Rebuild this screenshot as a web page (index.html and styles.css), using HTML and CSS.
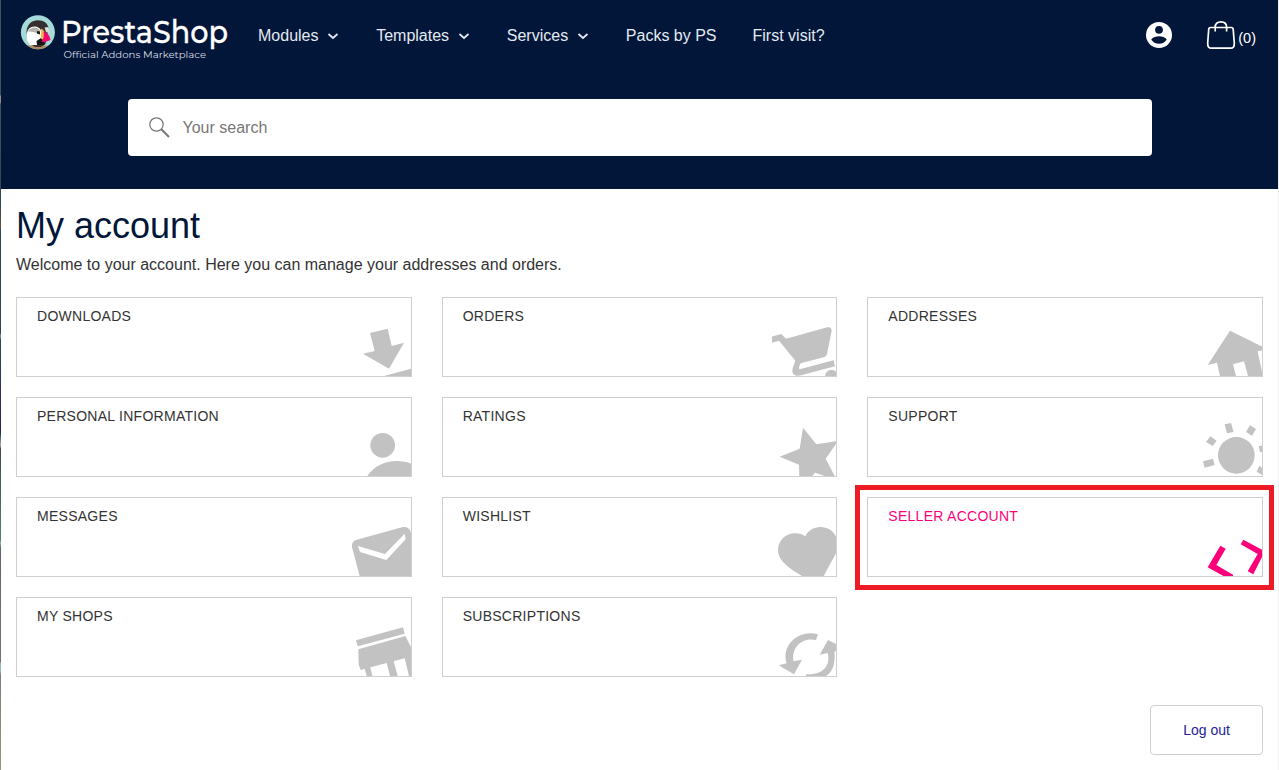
FILE: index.html
```
<!DOCTYPE html>
<html lang="en">
<head>
<meta charset="utf-8">
<title>My account</title>
<link rel="stylesheet" href="styles.css">
</head>
<body>
<div class="page">
  <header class="header">
    <div class="topbar">
      <a class="logo">
        <svg width="230" height="70" viewBox="1 0 230 70">
          <clipPath id="badge"><circle cx="37.9" cy="32.2" r="17"/></clipPath>
          <g clip-path="url(#badge)">
            <rect x="20" y="14" width="36" height="36" fill="#a4dbd9"/>
            <path d="M26.500 32C27 24 32 20.300 38 20.300c6 0 9.500 3 10.500 7.700l-3 16H29z" fill="#35302f"/>
            <path d="M27 34c0-5 4-8 8-7.500 5 .5 7 4 6.500 9l-1 9.500H30c-3-3-3.500-7-3-11z" fill="#fff"/>
            <path d="M28 31.500c3-5 9-5 12-1l-1 4c-3-2-6-3-11-3z" fill="#b4b4ae"/>
            <path d="M37 31l3 .5v3l-3-1z" fill="#1c1a1b"/>
            <path d="M44.500 27.500l4-.5 1 6-3.500-1z" fill="#dcdcdc"/>
            <path d="M36.500 41l4.500-3 4 7h-8z" fill="#161416"/>
            <path d="M41 28.500c2 1 3 2 4 4l-1 8-3-2z" fill="#f4b545"/>
            <path d="M43.500 31.500c4 1 6.500 5 7 8.500-3 1.500-6 2.300-9 2 2-3 3-6 2-10.500z" fill="#f5056c"/>
            <path d="M20 45.500h36v6H20z" fill="#a88b63"/>
            <path d="M32 45h12l-3 2h-6z" fill="#40342c"/>
          </g>
          <text class="logo-name" x="61" y="43" textLength="167" lengthAdjust="spacingAndGlyphs">PrestaShop</text>
          <text class="logo-tag" x="63.500" y="57.500" textLength="142.500" lengthAdjust="spacingAndGlyphs">Official Addons Marketplace</text>
        </svg>
      </a>
      <nav class="nav">
        <a>Modules<svg class="chev" width="14" height="10" viewBox="0 0 14 10"><path d="M2.500 3l4.500 4 4.500-4"/></svg></a>
        <a>Templates<svg class="chev" width="14" height="10" viewBox="0 0 14 10"><path d="M2.500 3l4.500 4 4.500-4"/></svg></a>
        <a>Services<svg class="chev" width="14" height="10" viewBox="0 0 14 10"><path d="M2.500 3l4.500 4 4.500-4"/></svg></a>
        <a>Packs by PS</a>
        <a>First visit?</a>
      </nav>
      <div class="tools">
        <svg width="26" height="26" viewBox="0 0 26 26"><circle cx="13" cy="13" r="13" fill="#fff"/><circle cx="13" cy="7.800" r="3.900" fill="#011638"/><path d="M5.200 17.500c1.500-2.300 5-3.300 7.800-3.300s6.300 1 7.800 3.300c-1.700 2.800-4.600 4.300-7.800 4.300s-6.100-1.500-7.800-4.300z" fill="#011638"/></svg>
        <a class="cart">
          <svg width="30" height="30" viewBox="0 0 30 30" fill="none" stroke="#fff" stroke-width="1.700"><path d="M4.500 7.500h20.700c1.300 0 1.900.700 2 2l1.100 13.500c.2 3.500-1.100 5.200-3.800 5.200H5.500c-2.700 0-4-1.700-3.800-5.200L2.700 9.500c.1-1.300.700-2 1.800-2zM9.200 11.500V7.300c0-3.500 2.200-5.500 5.700-5.500s5.700 2 5.700 5.500v4.200"/></svg>
          <span>(0)</span>
        </a>
      </div>
    </div>
    <div class="search">
      <svg width="22" height="22" viewBox="0 0 22 22" fill="none" stroke="#777"><circle cx="7.500" cy="7.500" r="6.700" stroke-width="1.200"/><path d="M12.300 12.300l7.700 7.700" stroke-width="2"/></svg>
      <span>Your search</span>
    </div>
  </header>
  <main class="main">
    <h1>My account</h1>
    <p class="intro">Welcome to your account. Here you can manage your addresses and orders.</p>
    <div class="grid">
      <a class="card"><span>DOWNLOADS</span>
        <svg class="icon" viewBox="21 36 192 162"><path d="M90 69l53-13 12 52 37-10-45 78-78-45 35-8zM132 198l81-22v22z"/></svg></a>
      <a class="card"><span>ORDERS</span>
        <svg class="icon" viewBox="36 36 192 162"><path d="M33 80l31-8 14 14 124-34c8-2 13 2 13 10l-14 70q-2 8-10 10l-69 18c-4 8-7 16-3 18l102-27 4 18-102 27c-15 4-26-2-26-14 0-8 6-20 9-30L57 92l-20 6zM195 198c2-12 10-18 20-18 6 0 10 2 14 6v12z"/></svg></a>
      <a class="card"><span>ADDRESSES</span>
        <svg class="icon" viewBox="24 36 192 162"><path d="M53 165l67-103 97 48v11l-14 3 14 66v8h-43l-12-44-33 9 9 35H90l-9-40z"/></svg></a>
      <a class="card"><span>PERSONAL INFORMATION</span>
        <svg class="icon" viewBox="21 336 192 162"><circle cx="128" cy="406" r="37"/><path d="M82 498c20-30 53-45 89-45 17 0 32 3 42 8v37z"/></svg></a>
      <a class="card"><span>RATINGS</span>
        <svg class="icon" viewBox="36 336 192 162"><path d="M129 353l40 50 59-9v8l-31 44 27 52h-29l-30-10-8 10h-39l-1-34-58-24 60-24z"/></svg></a>
      <a class="card"><span>SUPPORT</span>
        <svg class="icon" viewBox="24 336 192 162"><circle cx="139" cy="436" r="55"/><path d="M104 343l19-4 8 27-20 4zM180 346l18 11-12 20-18-11zM61 379l19 13-12 16-20-12zM39 454l30-8 5 19-30 8zM206 409l12-3v20h-8zM208 467l12 10v20l-20-12z"/></svg></a>
      <a class="card"><span>MESSAGES</span>
        <svg class="icon" viewBox="21 36 192 162"><path fill-rule="evenodd" d="M36 112c-2-12 4-20 14-23l136-37c15-4 24 4 27 17v129H59zM54 108l6 18 79 24 58-62-3-17-59 61z"/></svg></a>
      <a class="card"><span>WISHLIST</span>
        <svg class="icon" viewBox="36 36 192 162"><path d="M126 198c-24-16-72-40-72-78 0-28 23-50 52-50 12 0 22 3 30 9 7-17 25-28 45-28 21 0 39 11 47 29v50l-37 68z"/></svg></a>
      <a class="card active"><span>SELLER ACCOUNT</span>
        <svg class="icon" viewBox="24 126 192 162"><path d="M91 197l16 9-28 49 50 29v6h-25l-51-28zM160 179l57 31v19l-27 54-17-9 30-52-51-29z"/></svg></a>
      <a class="card"><span>MY SHOPS</span>
        <svg class="icon" viewBox="21 336 192 162"><path d="M48 391l141-39 5 19-141 38zM55 418l141-40 17 33v87h-6l-13-53-33 9 12 44h-23l-10-39-49 13 6 26H80l-6-22-12 4-6-17z"/></svg></a>
      <a class="card"><span>SUBSCRIPTIONS</span>
        <svg class="icon" viewBox="36 336 192 162"><path d="M174 373c-55-17-112 30-94 87l-24 6 46 27 24-44-25 5c-9-41 26-74 67-64zM204 390l24 12v20l-5 4c4 32-4 60-25 72h-60v-5c45 3 76-22 65-64l-24 5z"/></svg></a>
    </div>
    <div class="actions"><a class="logout">Log out</a></div>
  </main>
</div>
</body>
</html>
```
FILE: styles.css
```
* { box-sizing: border-box; }
body {
  margin: 0;
  height: 770px;
  overflow: hidden;
  padding: 0 1px;
  font-family: "Liberation Sans", Arial, sans-serif;
  font-size: 16px;
  background: linear-gradient(#3c5557 0 95px, #8d9182 96px 102px, #3c5557 104px, #354552 205px, #67513f 226px, #30455c 230px, #354052 333px, #86a0a5 336px, #30455f 340px, #2c235c 432px, #304a50 435px, #aaa 445px, #404950 449px, #527f77 540px, #8eb49a 543px, #5d6572 548px, #73747a 662px, #91bba2 663px 671px, #827e75 675px, #9c927f) left / 1px 100% no-repeat, #f0f0f0;
}
.page { height: 770px; background: #fff; }
.header { height: 189px; background: #011638; }
.topbar { display: flex; height: 70px; align-items: center; padding-right: 22px; }
.logo, .logo svg { display: block; overflow: visible; }
.logo-name { font: 500 31px Montserrat, Lato, sans-serif; fill: #fff; stroke: #fff; stroke-width: .3px; }
.logo-tag { font: 400 9.500px Montserrat, Lato, sans-serif; fill: #d9dde4; }
.nav { display: flex; gap: 36px; margin-left: 27px; padding-top: 2px; color: #e4eaf3; white-space: nowrap; }
.nav a { display: flex; align-items: center; }
.chev { margin: 0 0 0 7.700px; fill: none; stroke: #e4eaf3; stroke-width: 1.700; }
.tools { display: flex; align-items: center; margin-left: auto; gap: 34px; color: #fff; }
.cart { display: flex; align-items: center; gap: 2px; }
.cart span { padding-top: 6px; font-size: 14.500px; }
.search {
  display: flex;
  align-items: center;
  gap: 12px;
  width: 1024px;
  height: 57px;
  margin: 29px 0 0 127px;
  padding-left: 20.500px;
  border-radius: 4px;
  background: #fff;
  color: #777;
}
.main { padding: 16px 15px 0; }
h1 { margin: 0; font-size: 36px; line-height: 41px; font-weight: 400; color: #011638; }
.intro { margin: 8px 0 22px; line-height: 21px; color: #333; }
.grid { display: grid; grid-template-columns: repeat(3, 1fr); gap: 20px 30px; }
.card {
  position: relative;
  display: flex;
  justify-content: space-between;
  height: 80px;
  border: 1px solid #cfcfcf;
  padding-left: 20px;
  color: #333;
  font-size: 14px;
  letter-spacing: .27px;
}
.card span { padding-top: 10px; line-height: 16px; }
.icon { width: 64px; height: 54px; align-self: flex-end; fill: #c2c2c2; }
.card.active { color: #fb0079; }
.card.active .icon { fill: #fb0079; }
.card.active::after {
  content: "";
  position: absolute;
  inset: -13px -12px -14px -13px;
  border: 5px solid #ed1c24;
}
.actions { display: flex; justify-content: flex-end; margin-top: 28px; }
.logout {
  display: flex;
  align-items: center;
  justify-content: center;
  width: 113px;
  height: 50px;
  border: 1px solid #cfcfcf;
  border-radius: 4px;
  color: #251b97;
  font-size: 14px;
}
```
